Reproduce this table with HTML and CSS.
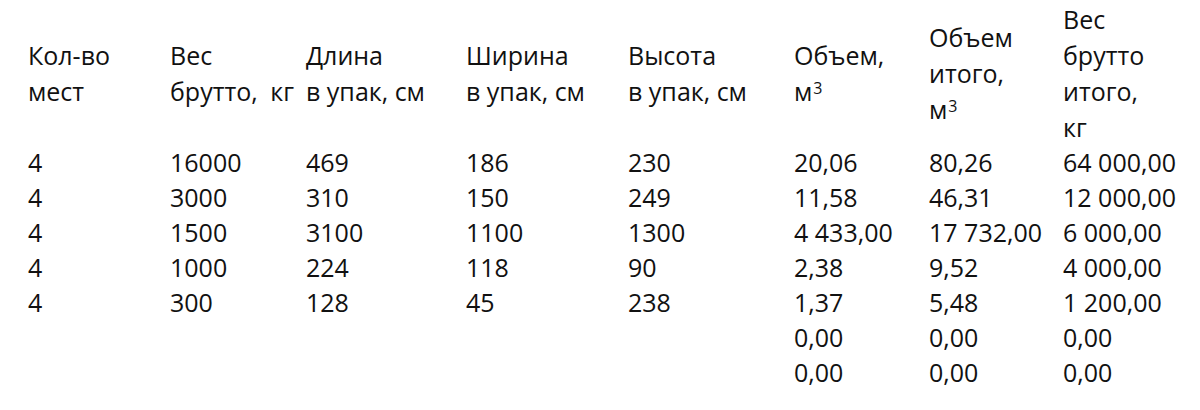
FILE: index.html
```html
<!DOCTYPE html>
<html lang="ru">
<head>
<meta charset="utf-8">
<link rel="stylesheet" href="styles.css">
</head>
<body>
<table class="cargo">
  <colgroup>
    <col class="c1"><col class="c2"><col class="c3"><col class="c4"><col class="c5"><col class="c6"><col class="c7"><col class="c8">
  </colgroup>
  <thead>
    <tr>
      <th>Кол-во<br>мест</th>
      <th>Вес<br>брутто,&ensp;кг</th>
      <th>Длина<br>в упак, см</th>
      <th>Ширина<br>в упак, см</th>
      <th>Высота<br>в упак, см</th>
      <th>Объем,<br>м<sup class="pow">3</sup></th>
      <th>Объем<br>итого,<br>м<sup class="pow">3</sup></th>
      <th>Вес<br>брутто<br>итого,<br>кг</th>
    </tr>
  </thead>
  <tbody>
    <tr><td>4</td><td>16000</td><td>469</td><td>186</td><td>230</td><td>20,06</td><td>80,26</td><td>64 000,00</td></tr>
    <tr><td>4</td><td>3000</td><td>310</td><td>150</td><td>249</td><td>11,58</td><td>46,31</td><td>12 000,00</td></tr>
    <tr><td>4</td><td>1500</td><td>3100</td><td>1100</td><td>1300</td><td>4 433,00</td><td>17 732,00</td><td>6 000,00</td></tr>
    <tr><td>4</td><td>1000</td><td>224</td><td>118</td><td>90</td><td>2,38</td><td>9,52</td><td>4 000,00</td></tr>
    <tr><td>4</td><td>300</td><td>128</td><td>45</td><td>238</td><td>1,37</td><td>5,48</td><td>1 200,00</td></tr>
    <tr><td></td><td></td><td></td><td></td><td></td><td>0,00</td><td>0,00</td><td>0,00</td></tr>
    <tr><td></td><td></td><td></td><td></td><td></td><td>0,00</td><td>0,00</td><td>0,00</td></tr>
  </tbody>
</table>
</body>
</html>
```
FILE: styles.css
```css
html, body {
  margin: 0;
  padding: 0;
  background: #ffffff;
}
body {
  font-family: "Open Sans", "Noto Sans", sans-serif;
  font-size: 25px;
  color: #111111;
}
.cargo {
  border-collapse: collapse;
  table-layout: fixed;
  margin-left: 28px;
  width: 1172px;
}
.c1 { width: 142px; }
.c2 { width: 136px; }
.c3 { width: 160px; }
.c4 { width: 162px; }
.c5 { width: 166px; }
.c6 { width: 135px; }
.c7 { width: 134px; }
.c8 { width: 137px; }
.cargo th {
  font-weight: normal;
  text-align: left;
  vertical-align: middle;
  line-height: 36px;
  padding: 1px 0 0 0;
  white-space: nowrap;
}
.cargo td {
  text-align: left;
  line-height: 35px;
  padding: 0;
  white-space: nowrap;
  height: 35px;
}
.pow {
  font-size: 16px;
  line-height: 0;
  vertical-align: 7px;
  margin-left: 1px;
}
```
